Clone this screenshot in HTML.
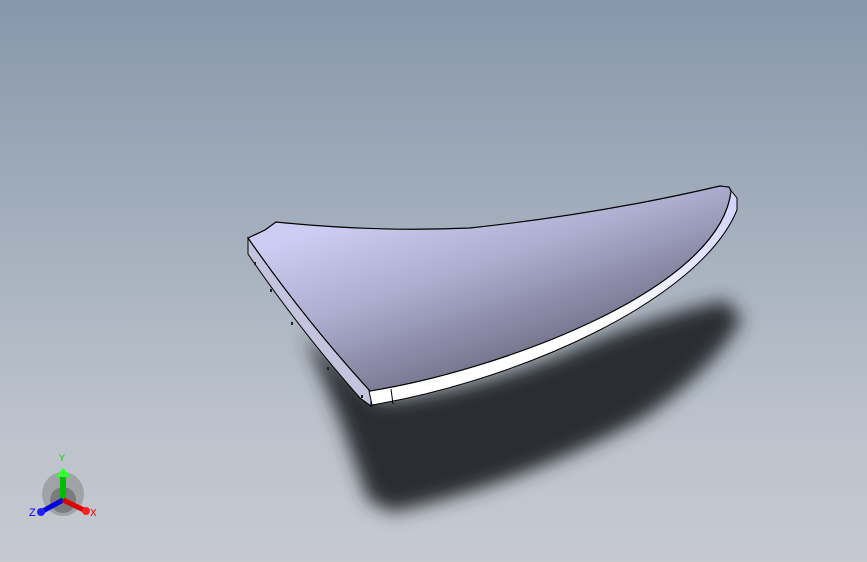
<!DOCTYPE html>
<html><head><meta charset="utf-8"><style>
html,body{margin:0;padding:0}
body{width:867px;height:562px;overflow:hidden;background:linear-gradient(180deg,#8797ab 0%,#a3afbd 40%,#bcc2cb 75%,#c6c9d0 100%);font-family:"Liberation Sans",sans-serif}
</style></head><body>
<svg width="867" height="562" viewBox="0 0 867 562" style="position:absolute;left:0;top:0">
<defs>
<filter id="b" x="-20%" y="-20%" width="140%" height="140%"><feGaussianBlur stdDeviation="9"/></filter>
<linearGradient id="top" x1="360" y1="215" x2="420" y2="395" gradientUnits="userSpaceOnUse">
<stop offset="0" stop-color="#cdcdf3"/><stop offset="0.45" stop-color="#adadd0"/><stop offset="1" stop-color="#72728a"/></linearGradient>
<linearGradient id="side" x1="390" y1="400" x2="735" y2="210" gradientUnits="userSpaceOnUse">
<stop offset="0" stop-color="#ffffff"/><stop offset="0.6" stop-color="#ffffff"/><stop offset="1" stop-color="#d4d4fa"/></linearGradient>
</defs>
<path d="M305 335 L340 420 L368 500 L392 512 Q520 485 640 420 Q715 370 742 318 L725 300 Q640 320 560 355 Q470 390 380 400 Z" fill="#2c2e33" filter="url(#b)"/>
<path d="M248 238 L248 254 Q300 330 360 398 L371 406 L371 390 Q305 320 248 238 Z" fill="#c4c4de" stroke="#000" stroke-width="1"/>
<path d="M369 391 C500 370 720 290 729 188 L737 198 L737 210 C700 300 520 380 372 405 Z" fill="url(#side)" stroke="#000" stroke-width="1"/>
<line x1="391" y1="389" x2="393" y2="404" stroke="#000"/>
<path d="M248 238 L265 230 L276 222 L286 223 Q380 232 470 228 Q600 214 720 186 L729 187 L731 191 C720 290 500 370 370 391 Q305 320 248 238 Z" fill="url(#top)" stroke="#000" stroke-width="1.2"/>
<g fill="#222"><rect x="254" y="262" width="2" height="3"/><rect x="270" y="289" width="2" height="3"/><rect x="291" y="322" width="2" height="3"/><rect x="327" y="367" width="2" height="3"/><rect x="361" y="395" width="2" height="3"/></g>
<ellipse cx="63" cy="494" rx="21" ry="22" fill="#777" opacity="0.45"/>
<ellipse cx="63" cy="500" rx="13" ry="13" fill="#555" opacity="0.5"/>
<rect x="60" y="474" width="6" height="27" fill="#0b0"/>
<path d="M55 477 L63 468 L71 477 Z" fill="#3f3"/>
<line x1="63" y1="500" x2="41" y2="512" stroke="#0000e0" stroke-width="5"/>
<circle cx="41" cy="512" r="4" fill="#22f"/>
<line x1="63" y1="500" x2="86" y2="511" stroke="#d00" stroke-width="5"/>
<circle cx="86" cy="511" r="4" fill="#f22"/>
<text x="59" y="461" font-size="9" fill="#0c0">Y</text>
<text x="29" y="516" font-size="11" fill="#00f">Z</text>
<text x="90" y="516" font-size="10" fill="#e00">X</text>
</svg>
</body></html>
